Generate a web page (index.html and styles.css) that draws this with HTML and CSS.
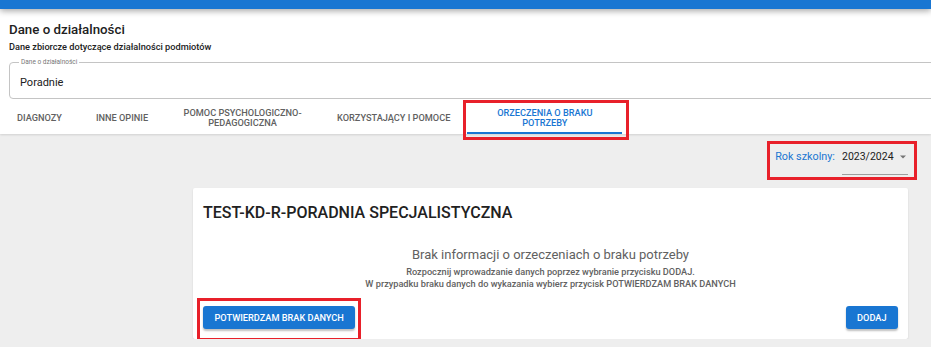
FILE: index.html
```html
<!DOCTYPE html>
<html lang="pl">
<head>
    <meta charset="UTF-8">
    <meta name="viewport" content="width=device-width, initial-scale=1.0">
    <title>Dane o działalności</title>
    <link rel="stylesheet" href="styles.css">
</head>
<body>
    <div class="appbar"></div>

    <section class="head">
        <h1>Dane o działalności</h1>
        <p class="sub">Dane zbiorcze dotyczące działalności podmiotów</p>
        <fieldset class="field">
            <legend>Dane o działalności</legend>
            <span>Poradnie</span>
        </fieldset>
        <nav class="tabs">
            <div class="tab">Diagnozy</div>
            <div class="tab">Inne opinie</div>
            <div class="tab">Pomoc psychologiczno-pedagogiczna</div>
            <div class="tab">Korzystający i pomoce</div>
            <div class="tab active mark mark-tab">Orzeczenia o braku potrzeby</div>
        </nav>
    </section>

    <main class="content">
        <div class="year-row">
            <div class="year">
                <span class="year-label">Rok szkolny:</span>
                <div class="select">
                    <span>2023/2024</span>
                    <svg width="10" height="10" viewBox="0 0 10 10"><path d="M2 3.5h6L5 6.5z" fill="#757575"/></svg>
                </div>
            </div>
        </div>

        <div class="card">
            <h2>TEST-KD-R-PORADNIA SPECJALISTYCZNA</h2>
            <div class="empty">
                <h3>Brak informacji o orzeczeniach o braku potrzeby</h3>
                <p>Rozpocznij wprowadzanie danych poprzez wybranie przycisku DODAJ.</p>
                <p>W przypadku braku danych do wykazania wybierz przycisk POTWIERDZAM BRAK DANYCH</p>
            </div>
            <div class="actions">
                <span class="mark mark-btn"><button class="button">Potwierdzam brak danych</button></span>
                <button class="button">Dodaj</button>
            </div>
        </div>
    </main>
</body>
</html>
```

FILE: styles.css
```css
body {
    margin: 0;
    font-family: Roboto, "Liberation Sans", Arial, sans-serif;
    background-color: #eeeeee;
    color: #212121;
    overflow: hidden;
}
.appbar {
    height: 9px;
    background: #1976d2;
    box-shadow: 0 2px 6px rgba(0, 0, 0, 0.35);
    position: relative;
    z-index: 2;
}
.head {
    background: #fff;
    padding: 13px 0 0 9px;
    box-shadow: 0 1px 2px rgba(0, 0, 0, 0.12);
}
.head h1 {
    margin: 0;
    font-size: 13.3px;
    font-weight: 500;
    line-height: 16px;
}
.sub {
    margin: 3px 0 0;
    font-size: 9.2px;
    font-weight: 500;
    line-height: 11px;
}
.field {
    margin: 6px -30px 0 0;
    padding: 0 0 0 10px;
    height: 41px;
    box-sizing: border-box;
    border: 1px solid #c4c4c4;
    border-radius: 4px;
    display: flex;
    align-items: center;
}
.field legend {
    font-size: 6.5px;
    color: #777;
    padding: 0 2px;
    margin-left: -1px;
    line-height: 8px;
}
.field span {
    font-size: 11px;
}
.tabs {
    display: flex;
    margin: 2px 0 0 -9px;
    height: 33px;
}
.tab {
    box-sizing: border-box;
    max-width: 155px;
    padding: 0 17px;
    display: flex;
    align-items: center;
    justify-content: center;
    text-align: center;
    text-transform: uppercase;
    font-size: 9.2px;
    font-weight: 500;
    line-height: 10px;
    color: #616161;
}
.tab.active {
    width: 155px;
    color: #1976d2;
    border-bottom: 2px solid #1976d2;
    padding-top: 2px;
}
.mark {
    position: relative;
}
.mark::after {
    content: "";
    position: absolute;
    border: 3px solid #e8202a;
    pointer-events: none;
}
.mark-tab::after {
    left: -4px;
    right: -7px;
    top: -1px;
    bottom: -8px;
}
.mark-btn {
    display: inline-block;
}
.mark-btn::after {
    left: -6px;
    right: -6px;
    top: -8px;
    bottom: -12px;
}
.content {
    padding: 7px 23px 0 193px;
}
.year-row {
    display: flex;
    justify-content: flex-end;
    margin-right: -9px;
}
.year {
    display: flex;
    align-items: flex-start;
    border: 3px solid #e8202a;
    padding: 6px 6px 2px 5px;
    font-size: 11px;
}
.year-label {
    color: #1976d2;
    margin-right: 7px;
    line-height: 13px;
    font-size: 10.8px;
}
.select {
    display: flex;
    justify-content: space-between;
    align-items: center;
    width: 66px;
    padding-bottom: 11px;
    border-bottom: 1px solid #9e9e9e;
    line-height: 13px;
    font-size: 10.5px;
}
.card {
    margin-top: 8px;
    background: #fff;
    border-radius: 2px;
    box-shadow: 0 1px 2px rgba(0, 0, 0, 0.12);
    padding: 16px 10px 10px;
}
.card h2 {
    margin: 0;
    font-size: 16px;
    font-weight: 500;
    line-height: 18px;
}
.empty {
    text-align: center;
    color: #616161;
    margin-top: 25px;
}
.empty h3 {
    margin: 0 0 4px;
    font-size: 13px;
    font-weight: 400;
    line-height: 15px;
}
.empty p {
    margin: 0;
    font-size: 9.2px;
    font-weight: 500;
    line-height: 11.5px;
}
.actions {
    display: flex;
    justify-content: space-between;
    align-items: flex-end;
    margin-top: 17px;
}
.button {
    display: block;
    height: 23px;
    padding: 0 11.5px;
    background: #1976d2;
    color: #fff;
    border: none;
    border-radius: 3px;
    font-family: inherit;
    font-size: 9.2px;
    font-weight: 500;
    text-transform: uppercase;
    box-shadow: 0 2px 2px rgba(0, 0, 0, 0.25);
    cursor: pointer;
}
.button:hover {
    background: #1565c0;
}
```
